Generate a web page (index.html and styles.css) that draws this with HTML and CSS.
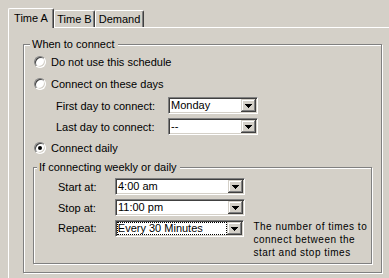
FILE: index.html
```html
<!DOCTYPE html>
<html lang="en">
<head>
    <meta charset="UTF-8">
    <title>Schedule - Time A</title>
    <link rel="stylesheet" href="styles.css">
</head>
<body>
    <div class="tabstrip">
        <div class="tab active">Time A</div>
        <div class="tab tab-b">Time B</div>
        <div class="tab tab-demand">Demand</div>
    </div>
    <div class="panel">
        <fieldset class="group outer">
            <legend>When to connect</legend>
            <label class="radio-row"><span class="radio"></span>Do not use this schedule</label>
            <label class="radio-row"><span class="radio"></span>Connect on these days</label>
            <div class="field-row">
                <span class="field-label">First day to connect:</span>
                <div class="combo day-combo">
                    <span class="combo-text">Monday</span>
                    <span class="drop"><svg width="7" height="4"><path d="M0 0h7v1H0zM1 1h5v1H1zM2 2h3v1H2zM3 3h1v1H3z"/></svg></span>
                </div>
            </div>
            <div class="field-row">
                <span class="field-label">Last day to connect:</span>
                <div class="combo day-combo">
                    <span class="combo-text">--</span>
                    <span class="drop"><svg width="7" height="4"><path d="M0 0h7v1H0zM1 1h5v1H1zM2 2h3v1H2zM3 3h1v1H3z"/></svg></span>
                </div>
            </div>
            <label class="radio-row short"><span class="radio checked"></span>Connect daily</label>

            <fieldset class="group inner">
                <legend>If connecting weekly or daily</legend>
                <div class="time-row">
                    <span class="field-label">Start at:</span>
                    <div class="combo time-combo">
                        <span class="combo-text">4:00 am</span>
                        <span class="drop"><svg width="7" height="4"><path d="M0 0h7v1H0zM1 1h5v1H1zM2 2h3v1H2zM3 3h1v1H3z"/></svg></span>
                    </div>
                </div>
                <div class="time-row">
                    <span class="field-label">Stop at:</span>
                    <div class="combo time-combo">
                        <span class="combo-text">11:00 pm</span>
                        <span class="drop"><svg width="7" height="4"><path d="M0 0h7v1H0zM1 1h5v1H1zM2 2h3v1H2zM3 3h1v1H3z"/></svg></span>
                    </div>
                </div>
                <div class="time-row repeat-row">
                    <span class="field-label">Repeat:</span>
                    <div class="combo time-combo">
                        <span class="combo-text focus">Every 30 Minutes</span>
                        <span class="drop"><svg width="7" height="4"><path d="M0 0h7v1H0zM1 1h5v1H1zM2 2h3v1H2zM3 3h1v1H3z"/></svg></span>
                    </div>
                    <p class="desc">The number of times to connect between the start and stop times</p>
                </div>
            </fieldset>
        </fieldset>
    </div>
</body>
</html>
```

FILE: styles.css
```css
body { margin: 0; background: #d4d0c8; font-family: "Liberation Sans", Arial, sans-serif; font-size: 11px; color: #000; overflow: hidden; height: 278px; }

/* tabs */
.tabstrip { display: flex; align-items: flex-end; height: 19px; padding: 8px 0 0 8px; }
.tab { box-sizing: border-box; height: 17px; display: flex; align-items: center; justify-content: center; border-top: 1px solid #fff; border-left: 1px solid #fff; border-right: 1px solid #404040; box-shadow: inset -1px 0 #808080; border-top-left-radius: 2px; border-top-right-radius: 2px; }
.tab.active { width: 46px; height: 20px; margin-bottom: -1px; padding-bottom: 1px; position: relative; z-index: 1; background: #d4d0c8; }
.tab-b { width: 41px; }
.tab-demand { width: 49px; }

.panel { margin-left: 8px; height: 250px; border-top: 1px solid #fff; border-left: 1px solid #fff; }

/* group boxes */
.group { box-sizing: border-box; min-width: 0; margin: 0; padding: 0; border: 1px solid #808080; box-shadow: 1px 1px 0 #fff, inset 1px 1px 0 #fff; }
.group legend { padding: 0 3px 0 2px; line-height: 13px; background: #d4d0c8; }
.outer { width: 359px; margin: 10px 0 0 14px; }
.outer > legend { margin-left: 6px; }
.inner { margin: 3px 9px 8px 9px; padding: 2px 0 4px 0; }
.inner > legend { margin-left: 3px; }

/* radios */
.radio-row { display: flex; align-items: center; height: 22px; padding-left: 10px; }
.radio-row.short { height: 21px; }
.radio { box-sizing: border-box; width: 12px; height: 12px; margin-right: 5px; display: flex; align-items: center; justify-content: center; border-radius: 50%; background: #fff; border: 1px solid; border-color: #808080 #fff #fff #808080; box-shadow: inset 1px 1px #404040, inset -1px -1px #d4d0c8; }
.radio.checked::after { content: ""; width: 4px; height: 4px; border-radius: 50%; background: #000; }

/* rows with combos */
.field-row { display: flex; align-items: center; height: 21px; padding-left: 32px; }
.field-row .field-label { width: 112px; }
.time-row { display: flex; align-items: center; height: 21px; padding-left: 24px; }
.time-row .field-label { width: 57px; }
.repeat-row { height: auto; align-items: flex-start; padding-top: 2px; }
.repeat-row .field-label { line-height: 17px; }

.combo { box-sizing: border-box; height: 17px; padding: 1px; display: flex; background: #fff; border: 1px solid; border-color: #808080 #fff #fff #808080; box-shadow: inset 1px 1px #404040, inset -1px -1px #d4d0c8; }
.day-combo { width: 90px; }
.time-combo { width: 130px; }
.combo-text { flex: 1; padding-left: 1px; line-height: 13px; white-space: nowrap; overflow: hidden; }
.combo-text.focus { box-sizing: border-box; padding-left: 0; border: 1px dotted #000; line-height: 11px; }
.drop { width: 15px; height: 13px; display: flex; align-items: center; justify-content: center; background: #d4d0c8; box-shadow: inset -1px -1px #404040, inset 1px 1px #d4d0c8, inset -2px -2px #808080, inset 2px 2px #fff; }
.drop svg { display: block; margin-top: 1px; }

.desc { width: 118px; margin: 0 0 0 9px; font-size: 10px; line-height: 13px; letter-spacing: 0.5px; }
```
